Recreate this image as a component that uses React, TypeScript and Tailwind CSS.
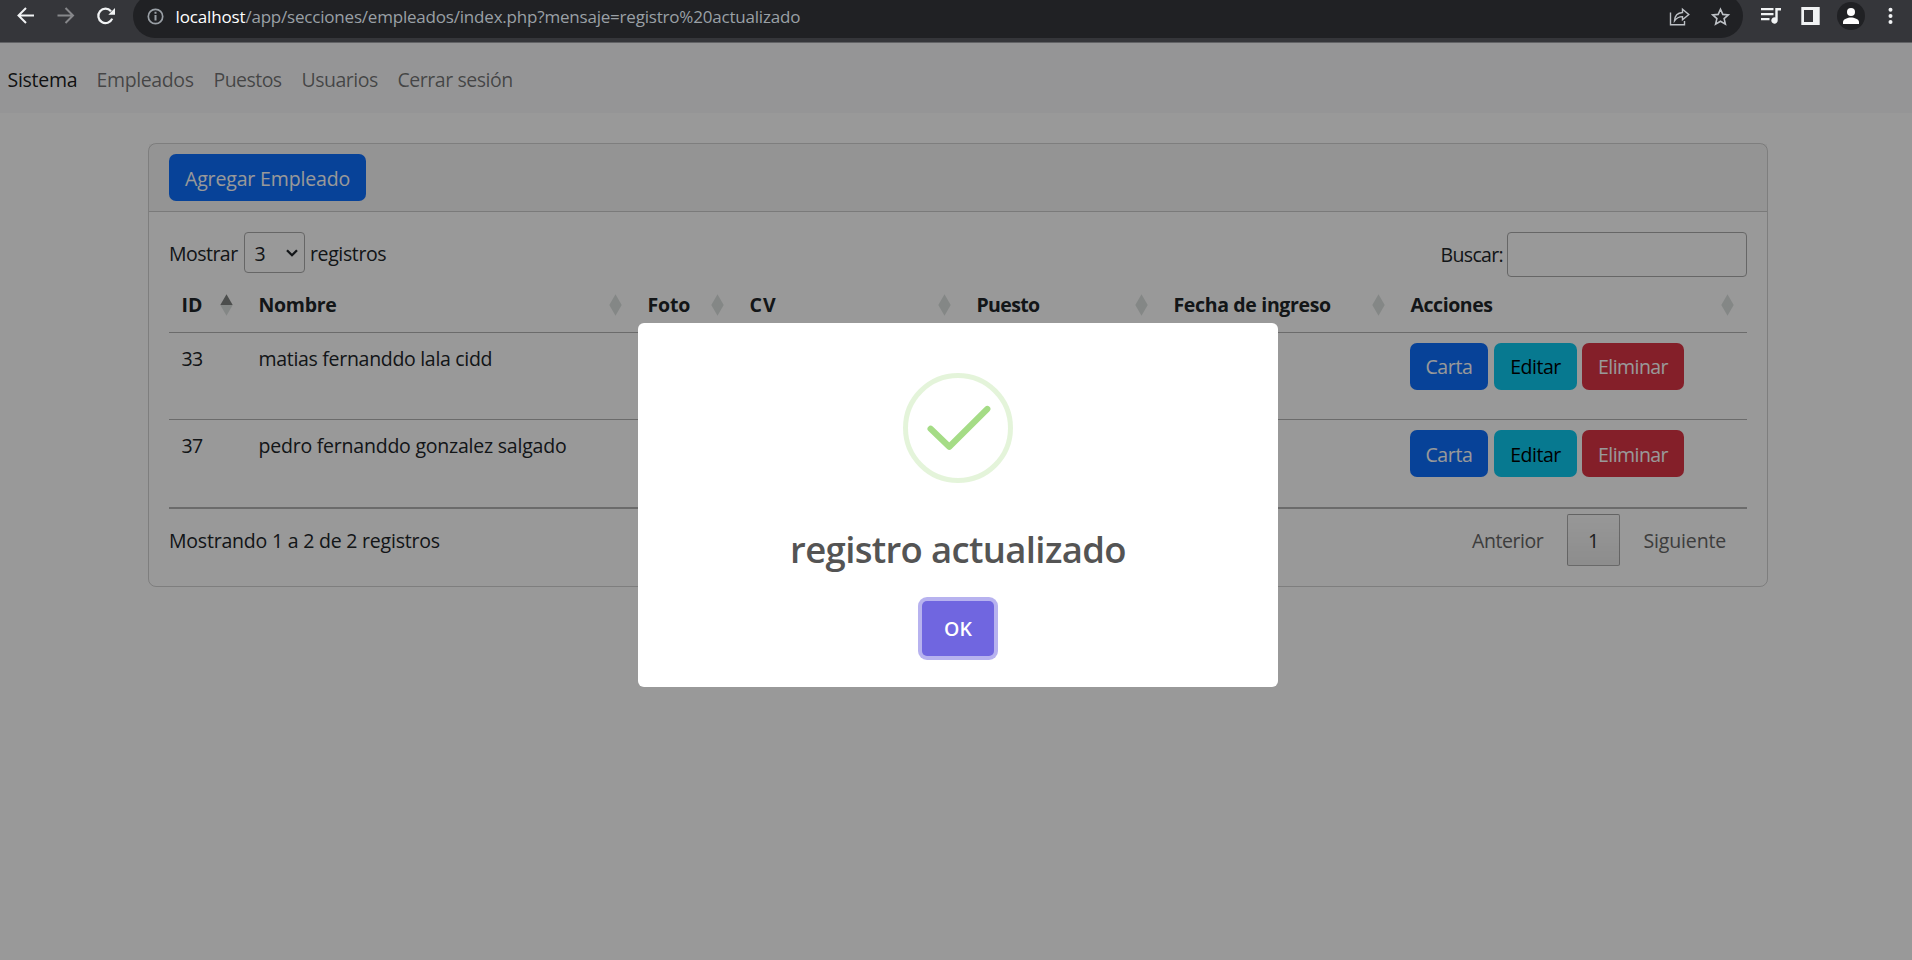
import type { ReactNode } from "react";

type SortState = "none" | "asc";

interface Column {
  label: string;
  width: string;
  tracking: string;
  sort: SortState;
}

interface Employee {
  id: string;
  name: string;
  tracking: string;
  buttonPadding: string;
}

const columns: Column[] = [
  { label: "ID", width: "w-[77px]", tracking: "tracking-normal", sort: "asc" },
  { label: "Nombre", width: "w-[389px]", tracking: "tracking-[-0.3px]", sort: "none" },
  { label: "Foto", width: "w-[102px]", tracking: "tracking-[-0.2px]", sort: "none" },
  { label: "CV", width: "w-[227px]", tracking: "tracking-[1px]", sort: "none" },
  { label: "Puesto", width: "w-[197px]", tracking: "tracking-[-0.65px]", sort: "none" },
  { label: "Fecha de ingreso", width: "w-[237px]", tracking: "tracking-[-0.34px]", sort: "none" },
  { label: "Acciones", width: "w-[349px]", tracking: "tracking-[-0.44px]", sort: "none" },
];

const employees: Employee[] = [
  { id: "33", name: "matias fernanddo lala cidd", tracking: "tracking-[-0.3px]", buttonPadding: "pt-0" },
  { id: "37", name: "pedro fernanddo gonzalez salgado", tracking: "tracking-[-0.22px]", buttonPadding: "pt-[2px]" },
];

function BrowserBar() {
  return (
    <header className="flex h-[43px] shrink-0 overflow-hidden border-b border-[#616265] bg-[#35363a]">
      <svg className="ml-4 h-[42px] w-5 shrink-0" viewBox="16 0 20 42" fill="none" stroke="#f1f3f4" strokeWidth="2">
        <path d="M34 15.500H18.500M26 8l-7.500 7.500L26 23" />
      </svg>
      <svg className="ml-5 h-[42px] w-5 shrink-0" viewBox="56 0 20 42" fill="none" stroke="#86878a" strokeWidth="2">
        <path d="M57.500 15.500H73M65.500 8l7.500 7.500L65.500 23" />
      </svg>
      <svg className="ml-5 h-[42px] w-5 shrink-0" viewBox="96 0 20 42" fill="none">
        <path d="M112.200 18.600A7.200 7.200 0 1 1 111 11.200" stroke="#f1f3f4" strokeWidth="2.200" />
        <path d="M115 8v6.700h-6.700z" fill="#f1f3f4" />
      </svg>
      <div className="-mt-[6px] ml-[17px] flex h-11 w-[1610px] shrink-0 rounded-[22px] bg-[#202124] pt-[6px]">
        <svg className="ml-[13px] h-[36px] w-5 shrink-0" viewBox="146 0 20 36" fill="none" stroke="#9aa0a6" strokeWidth="1.700">
          <circle cx="155.500" cy="16.500" r="7.200" />
          <path d="M155.500 15v5.500M155.500 11.800v2" strokeWidth="2" />
        </svg>
        <div className="ml-[9.500px] flex pt-[6px] text-[17px] leading-[22px] whitespace-nowrap text-[#9aa0a6]">
          <span className="tracking-[-0.150px] text-white">localhost</span>
          <span className="tracking-[-0.200px]">/app/secciones/empleados/index.php?mensaje=registro%20actualizado</span>
        </div>
        <svg className="mr-5 ml-auto h-[36px] w-[22px] shrink-0" viewBox="1670 0 22 36" fill="none" stroke="#bdc1c6" strokeWidth="1.400">
          <path d="M1671.500 12.500v12.300h14V21" />
          <path d="M1675.500 20.800c.3-5.300 3-8 8-8.300V9.300l6.300 5.200-6.300 5.300v-3.200c-3.500 0-6 1.200-8 4.200z" />
        </svg>
        <svg className="mr-[12px] h-[36px] w-5 shrink-0" viewBox="1711 0 20 36" fill="none" stroke="#bdc1c6" strokeWidth="1.600">
          <path d="M1720.500 9.200l2.300 5.200 5.500.5-4.200 3.700 1.300 5.500-4.900-2.900-4.900 2.900 1.300-5.500-4.200-3.700 5.500-.5z" />
        </svg>
      </div>
      <svg className="ml-[17px] h-[42px] w-[22px] shrink-0" viewBox="1760 0 22 42" fill="#f1f3f4">
        <path d="M1761 8h12.500v2.200H1761zM1761 13h12.500v2.200H1761zM1761 18h8.500v2.200H1761z" />
        <path d="M1775.300 8h5.700v2.400h-3.300v10a3.200 3.200 0 1 1-2.400-3z" />
      </svg>
      <svg className="ml-[18px] h-[42px] w-[22px] shrink-0" viewBox="1800 0 22 42" fill="#f1f3f4">
        <path fillRule="evenodd" d="M1801.300 7h18.400v18h-18.400zM1804 10v12h9V10z" />
      </svg>
      <svg className="ml-[14px] h-[42px] w-[30px] shrink-0" viewBox="1836 0 30 42">
        <circle cx="1851" cy="16" r="14" fill="#202124" />
        <circle cx="1851" cy="12" r="4" fill="#ffffff" />
        <path d="M1843 24v-2c0-3 5-4.500 8-4.500s8 1.500 8 4.500v2z" fill="#ffffff" />
      </svg>
      <svg className="ml-[20px] h-[42px] w-[10px] shrink-0" viewBox="1886 0 10 42" fill="#f1f3f4">
        <circle cx="1890.500" cy="9.700" r="2" />
        <circle cx="1890.500" cy="16" r="2" />
        <circle cx="1890.500" cy="22" r="2" />
      </svg>
    </header>
  );
}

function NavBar() {
  return (
    <nav className="flex h-[70px] bg-[#f8f9fa] pt-[22px] pl-[7.500px] leading-[30px] text-black/55">
      <a className="w-[89px] tracking-[-0.270px] text-black/90">Sistema</a>
      <a className="w-[117px] tracking-[-0.370px]">Empleados</a>
      <a className="w-[88px] tracking-[-0.550px]">Puestos</a>
      <a className="w-[96px] tracking-[-0.500px]">Usuarios</a>
      <a className="tracking-[-0.450px]">Cerrar sesión</a>
    </nav>
  );
}

function SortIcon({ state }: { state: SortState }) {
  return (
    <svg className="mt-[4px] h-[22px] w-[13px] shrink-0" viewBox="0 0 13 22">
      <path d="M6.500.3l6.200 10.700H.3z" fill={state === "asc" ? "#7f8281" : "#dde2df"} />
      <path d="M6.500 21.700L.3 11h12.400z" fill="#dde2df" />
    </svg>
  );
}

function ActionButton({ className, children }: { className: string; children: ReactNode }) {
  return <button className={`block h-[47px] shrink-0 rounded-[7px] leading-[30px] whitespace-nowrap ${className}`}>{children}</button>;
}

function EmployeeTable() {
  return (
    <table className="w-[1578px] table-fixed border-separate border-spacing-0 border-b-2 border-black/30 text-left">
      <thead>
        <tr className="h-14">
          {columns.map((column) => (
            <th key={column.label} className={`${column.width} border-b border-black/30 p-0 pt-[13px] pl-[12.500px] align-top font-bold`}>
              <div className="flex justify-between pr-[13.500px] leading-[30px]">
                <span className={column.tracking}>{column.label}</span>
                <SortIcon state={column.sort} />
              </div>
            </th>
          ))}
        </tr>
      </thead>
      <tbody>
        {employees.map((employee) => (
          <tr key={employee.id} className="h-[87px] align-top leading-[30px] [&>td]:border-black/30 [&>td]:p-0 [&>td]:pt-[11px] [&>td]:pl-[12.500px] [&:first-child>td]:border-b">
            <td className="tracking-[-0.700px]">{employee.id}</td>
            <td className={employee.tracking}>{employee.name}</td>
            <td />
            <td />
            <td />
            <td />
            <td>
              <div className="-mt-px -ml-[0.500px] flex">
                <ActionButton className={`mr-[6px] w-[78px] bg-[#0d6efd] tracking-[-0.330px] text-white ${employee.buttonPadding}`}>Carta</ActionButton>
                <ActionButton className={`mr-[5px] w-[83px] bg-[#0dcaf0] tracking-[-0.450px] text-black ${employee.buttonPadding}`}>Editar</ActionButton>
                <ActionButton className={`w-[102px] bg-[#dc3545] tracking-[-0.550px] text-white ${employee.buttonPadding}`}>Eliminar</ActionButton>
              </div>
            </td>
          </tr>
        ))}
      </tbody>
    </table>
  );
}

function EmployeeCard() {
  return (
    <section className="ml-[148px] h-[444px] w-[1620px] rounded-[8px] border border-black/[0.175]">
      <div className="h-[68px] border-b border-black/[0.175] bg-black/[0.03] pt-[10px] pl-5">
        <ActionButton className="w-[197px] bg-[#0d6efd] pt-[2px] tracking-[-0.150px] text-white">Agregar Empleado</ActionButton>
      </div>
      <div className="px-5 pt-5">
        <div className="flex h-[45px] justify-between leading-[30px]">
          <label className="flex">
            <span className="w-[75px] pt-[7px] tracking-[-0.530px]">Mostrar</span>
            <span className="flex h-[41px] w-[61px] justify-between rounded-[4px] border border-[#aaaaaa] pt-[6px] pr-[6px] pl-[9.500px]">
              3
              <svg className="mt-[9px] h-[10px] w-[12px]" viewBox="0 0 12 10" fill="none" stroke="#212529" strokeWidth="2.300">
                <path d="M1 2.200l5 5 5-5" />
              </svg>
            </span>
            <span className="pt-[7px] pl-[5px] tracking-[-0.380px]">registros</span>
          </label>
          <label className="flex">
            <span className="w-[66.500px] pt-[8px] tracking-[-0.650px]">Buscar:</span>
            <span className="h-[45px] w-[240px] rounded-[4px] border border-[#aaaaaa]" />
          </label>
        </div>
        <EmployeeTable />
        <div className="flex justify-between leading-[30px]">
          <p className="pt-[17px] tracking-[-0.210px]">Mostrando 1 a 2 de 2 registros</p>
          <div className="flex pt-[5px] text-[#666666]">
            <span className="w-[95px] pt-[12px] tracking-[-0.440px]">Anterior</span>
            <span className="h-[52px] w-[53px] rounded-[2px] border border-black/30 bg-linear-to-b from-black/[0.01] to-black/[0.08] pt-[11px] text-center text-[#333333]">
              1
            </span>
            <span className="w-[127px] pt-[12px] pl-[23.500px] tracking-[-0.150px]">Siguiente</span>
          </div>
        </div>
      </div>
    </section>
  );
}

function SuccessDialog() {
  return (
    <div className="absolute inset-0 flex justify-center bg-black/40 pt-[280px]">
      <div className="ml-[4px] flex h-[364px] w-[640px] flex-col items-center rounded-[6px] bg-white pt-[50px]" role="dialog">
        <svg className="h-[110px] w-[110px] shrink-0" viewBox="0 0 110 110" fill="none">
          <circle cx="55" cy="55" r="52.500" stroke="#a5dc86" strokeOpacity="0.300" strokeWidth="5" />
          <path d="M27.600 55.800L46.300 73.800 84.300 36" stroke="#a5dc86" strokeWidth="6.200" strokeLinecap="round" strokeLinejoin="round" />
        </svg>
        <h2 className="mt-[42px] text-[36.500px] leading-[48px] font-semibold tracking-[-0.660px] whitespace-nowrap text-[#545454]">registro actualizado</h2>
        <button className="mt-[28px] h-[55px] w-[72px] rounded-[5px] bg-[#7066e0] font-semibold text-white shadow-[0_0_0_4px_rgba(112,102,224,0.5)]">OK</button>
      </div>
    </div>
  );
}

export default function App() {
  return (
    <div className="flex h-[960px] w-[1912px] flex-col overflow-hidden bg-white font-['Open_Sans','Noto_Sans',sans-serif] text-[19.500px] text-[#212529]">
      <BrowserBar />
      <div className="relative flex-1">
        <NavBar />
        <main className="pt-[30px]">
          <EmployeeCard />
        </main>
        <SuccessDialog />
      </div>
    </div>
  );
}
